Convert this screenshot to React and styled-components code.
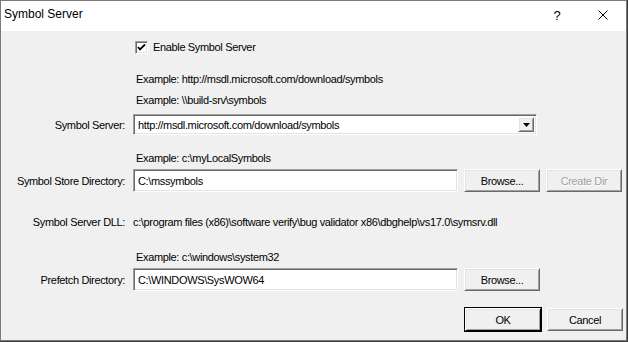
import React from "react";
import styled, { createGlobalStyle, css } from "styled-components";

const Global = createGlobalStyle`
  html, body { margin: 0; padding: 0; background: #3c3c3c; }
  #root { width: 628px; height: 342px; }
`;

const Window = styled.div`
  width: 625px;
  height: 339px;
  border: 1px solid #7a7a7a;
  background: #f0f0f0;
  display: flex;
  flex-direction: column;
  font-family: "Liberation Sans", Arial, sans-serif;
  font-size: 11px;
  letter-spacing: -0.35px;
  color: #000;
`;

const TitleBar = styled.div`
  height: 30px;
  background: #fff;
  display: flex;
  align-items: center;
  font-family: "Liberation Sans", Arial, sans-serif;
  font-size: 12px;
  letter-spacing: 0;
  padding-left: 3px;
`;

const Title = styled.div`
  flex: 1;
  padding-bottom: 4px;
`;

const TitleBtn = styled.div`
  width: ${(p) => p.$w}px;
  height: 30px;
  display: flex;
  align-items: center;
  justify-content: center;
  font-size: 13px;
  padding-bottom: 2px;
  box-sizing: border-box;
`;

const Body = styled.div`
  display: flex;
  flex-direction: column;
`;

const Row = styled.div`
  display: grid;
  grid-template-columns: 124px 1fr;
  column-gap: 8px;
  align-items: center;
  height: ${(p) => p.$h}px;
  margin-top: ${(p) => p.$mt}px;
  white-space: nowrap;
`;

const Label = styled.div`
  text-align: right;
`;

const Cell = styled.div`
  display: flex;
  align-items: center;
  gap: ${(p) => p.$gap || 0}px;
  padding-left: ${(p) => p.$pl || 0}px;
  height: 100%;
`;

const sunken = css`
  box-sizing: border-box;
  background: #fff;
  border-top: 1px solid #a0a0a0;
  border-left: 1px solid #a0a0a0;
  border-bottom: 1px solid #fff;
  border-right: 1px solid #fff;
  box-shadow: inset 1px 1px 0 #696969, inset -1px -1px 0 #e3e3e3;
`;

const TextBox = styled.div`
  ${sunken};
  width: ${(p) => p.$w}px;
  height: ${(p) => p.$h}px;
  display: flex;
  align-items: center;
  padding-left: 4px;
`;

const Combo = styled.div`
  ${sunken};
  width: 404px;
  height: 21px;
  display: flex;
  align-items: center;
  padding: 0 2px 0 4px;
`;

const ComboText = styled.div`
  flex: 1;
`;

const raised = css`
  box-sizing: border-box;
  background: #f0f0f0;
  border-top: 1px solid #fff;
  border-left: 1px solid #fff;
  border-bottom: 1px solid #696969;
  border-right: 1px solid #696969;
  box-shadow: inset 1px 1px 0 #e3e3e3, inset -1px -1px 0 #a0a0a0;
`;

const DropBtn = styled.div`
  ${raised};
  width: 16px;
  height: 15px;
  display: flex;
  align-items: center;
  justify-content: center;
`;

const Button = styled.div`
  ${raised};
  width: 76px;
  height: 23px;
  display: flex;
  align-items: center;
  justify-content: center;
  color: ${(p) => (p.$disabled ? "#a0a0a0" : "#000")};
  text-shadow: ${(p) => (p.$disabled ? "1px 1px 0 #fff" : "none")};
  ${(p) =>
    p.$default &&
    css`
      outline: 1px solid #000;
      outline-offset: 0px;
      border-bottom-color: #000;
      border-right-color: #000;
    `}
`;

const Check = styled.div`
  ${sunken};
  width: 13px;
  height: 13px;
  display: flex;
  align-items: center;
  justify-content: center;
`;

const Buttons = styled.div`
  display: flex;
  justify-content: flex-end;
  gap: 6px;
  margin-top: 17px;
  padding-right: 3px;
`;

export default function App() {
  return (
    <>
      <Global />
      <Window>
        <TitleBar>
          <Title>Symbol Server</Title>
          <TitleBtn $w={46}>?</TitleBtn>
          <TitleBtn $w={46}>
            <svg width="10" height="10" viewBox="0 0 10 10">
              <path d="M0.5 0.5 L9.5 9.5 M9.5 0.5 L0.5 9.5" stroke="#000" strokeWidth="1" fill="none" />
            </svg>
          </TitleBtn>
        </TitleBar>
        <Body>
          <Row $h={14} $mt={9}>
            <span />
            <Cell $pl={2} $gap={5}>
              <Check>
                <svg width="9" height="9" viewBox="0 0 9 9">
                  <path d="M1 4 L3 6.5 L8 1.5" stroke="#000" strokeWidth="1.8" fill="none" />
                </svg>
              </Check>
              Enable Symbol Server
            </Cell>
          </Row>
          <Row $h={14} $mt={18}>
            <span />
            <Cell $pl={3}>Example: http://msdl.microsoft.com/download/symbols</Cell>
          </Row>
          <Row $h={14} $mt={7}>
            <span />
            <Cell $pl={3}>Example: \\build-srv\symbols</Cell>
          </Row>
          <Row $h={21} $mt={7}>
            <Label>Symbol Server:</Label>
            <Cell>
              <Combo>
                <ComboText>http://msdl.microsoft.com/download/symbols</ComboText>
                <DropBtn>
                  <svg width="7" height="4" viewBox="0 0 7 4">
                    <path d="M0 0 H7 L3.5 4 Z" fill="#000" />
                  </svg>
                </DropBtn>
              </Combo>
            </Cell>
          </Row>
          <Row $h={14} $mt={16}>
            <span />
            <Cell $pl={3}>Example: c:\myLocalSymbols</Cell>
          </Row>
          <Row $h={23} $mt={4}>
            <Label>Symbol Store Directory:</Label>
            <Cell $gap={6}>
              <TextBox $w={325} $h={23}>C:\mssymbols</TextBox>
              <Button>Browse...</Button>
              <Button $disabled>Create Dir</Button>
            </Cell>
          </Row>
          <Row $h={14} $mt={23}>
            <Label>Symbol Server DLL:</Label>
            <Cell>c:\program files (x86)\software verify\bug validator x86\dbghelp\vs17.0\symsrv.dll</Cell>
          </Row>
          <Row $h={14} $mt={21}>
            <span />
            <Cell $pl={3}>Example: c:\windows\system32</Cell>
          </Row>
          <Row $h={23} $mt={4}>
            <Label>Prefetch Directory:</Label>
            <Cell $gap={6}>
              <TextBox $w={325} $h={23}>C:\WINDOWS\SysWOW64</TextBox>
              <Button>Browse...</Button>
            </Cell>
          </Row>
          <Buttons>
            <Button $default>OK</Button>
            <Button>Cancel</Button>
          </Buttons>
        </Body>
      </Window>
    </>
  );
}
